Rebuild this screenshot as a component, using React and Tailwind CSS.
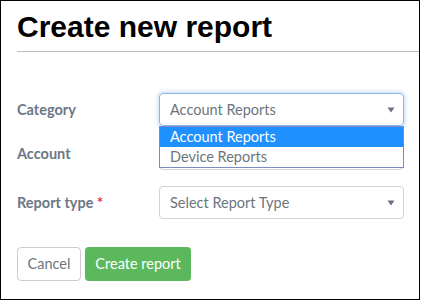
import React from "react";

function Caret() {
  return (
    <svg width="8" height="6" viewBox="0 0 8 6" className="absolute right-[8px] top-1/2 -translate-y-1/2">
      <path d="M0.5 0.5 L7.5 0.5 L4 5.5 Z" fill="#6b7280" />
    </svg>
  );
}

export default function App() {
  return (
    <div className="w-[421px] h-[301px] bg-white">
      <div className="relative w-[420px] h-[300px] border border-black bg-white pl-[16px] pt-[8px]">
        <h1 className="text-[30px] leading-[36px] font-bold text-black" style={{ fontFamily: '"Liberation Sans", Arial, sans-serif' }}>
          Create new report
        </h1>
        <div className="mt-[6px] h-px bg-[#b8bec4]" />
        <div className="pr-[15px]" style={{ fontFamily: 'Lato, "Open Sans", sans-serif' }}>
          <div className="mt-[41px] flex items-center">
            <div className="w-[142px] text-[14.5px] font-bold text-[#6c7785]">Category</div>
            <div className="relative flex-1 h-[33px] rounded-[4px] border border-[#8fb4e6] shadow-[0_0_4px_1px_rgba(120,170,240,0.45)] flex items-center pl-[10px] text-[14.5px] text-[#6c757d]">
              Account Reports
              <Caret />
            </div>
          </div>
          <div className="mt-[12px] flex items-center">
            <div className="w-[142px] text-[14.5px] font-bold text-[#6c7785]">Account</div>
            <div className="relative flex-1 h-[32px] rounded-[4px] border border-[#ced4da]" />
          </div>
          <div className="mt-[16px] flex items-center">
            <div className="w-[142px] text-[14.5px] font-bold text-[#6c7785]">
              Report type <span className="text-[#e3342f]">*</span>
            </div>
            <div className="relative flex-1 h-[33px] rounded-[4px] border border-[#ced4da] flex items-center pl-[10px] text-[14.5px] text-[#6c757d]">
              Select Report Type
              <Caret />
            </div>
          </div>
          <div className="mt-[28px] flex gap-[4px]">
            <button className="h-[34px] px-[9.5px] rounded-[4px] border border-[#ccc] bg-white text-[14.5px] text-[#6c757d]">Cancel</button>
            <button className="h-[34px] px-[10.5px] rounded-[4px] bg-[#5cb85c] text-[14.5px] text-white">Create report</button>
          </div>
        </div>
        <div className="absolute left-[158px] top-[125px] w-[245px] h-[42px] border border-[#7b8cbf] bg-white text-[14.5px] leading-[20px]" style={{ fontFamily: 'Lato, "Open Sans", sans-serif' }}>
          <div className="h-[20px] bg-[#1e90ff] text-white pl-[10px]">Account Reports</div>
          <div className="h-[20px] text-[#6c757d] pl-[10px]">Device Reports</div>
        </div>
      </div>
    </div>
  );
}
